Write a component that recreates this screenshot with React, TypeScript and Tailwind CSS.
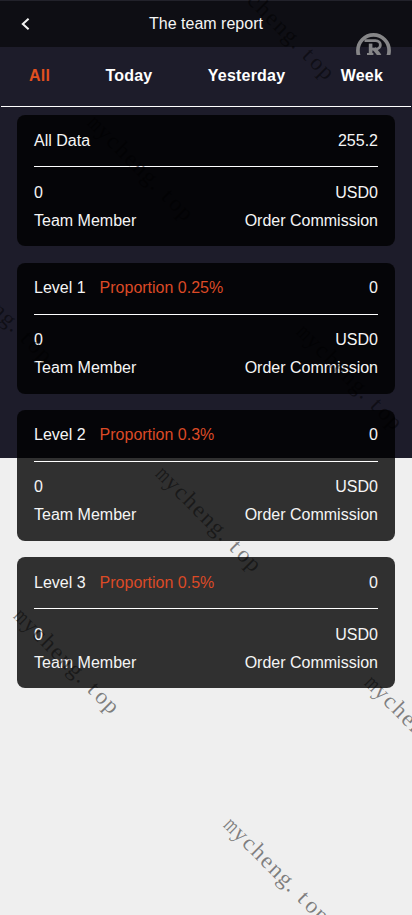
import { useState } from "react"
import clsx from "clsx"

interface ReportCard {
  title: string
  proportion?: string
  total: string
  members: string
  commission: string
}

const tabs = ["All", "Today", "Yesterday", "Week"]

const cards: ReportCard[] = [
  { title: "All Data", total: "255.2", members: "0", commission: "USD0" },
  { title: "Level 1", proportion: "0.25%", total: "0", members: "0", commission: "USD0" },
  { title: "Level 2", proportion: "0.3%", total: "0", members: "0", commission: "USD0" },
  { title: "Level 3", proportion: "0.5%", total: "0", members: "0", commission: "USD0" },
]

// centre of the first letter of each repeated mark
const marks = [
  [236, -17],
  [95, 124],
  [-46, 266],
  [304, 333],
  [163, 475],
  [21, 617],
  [372, 684],
  [231, 826],
]

function Header() {
  return (
    <header className="relative flex h-[47px] items-center justify-center border-t border-[#22222b] bg-[#0e0e14]">
      <svg
        className="absolute left-[21px] top-[17px]"
        width="9"
        height="12"
        viewBox="0 0 9 12"
        fill="none"
        stroke="#f2f2f2"
        strokeWidth="2"
      >
        <path d="M7.6 0.7 L1.8 6 L7.6 11.3" />
      </svg>
      <h1 className="text-base text-[#f5f5f5]">The team report</h1>
      <svg className="absolute left-[356px] top-8 z-10" width="35" height="22" viewBox="0 0 35 22">
        <circle cx="17.5" cy="17.5" r="15.6" fill="none" stroke="#868688" strokeWidth="3.7" />
        <g fill="none" stroke="#868688">
          <path d="M8.5 7.7 H19.4 C26 7.7 26 16.1 19.4 16.1 H16" strokeWidth="2.8" />
          <path d="M14.6 10.6 V22" strokeWidth="3.6" />
          <path d="M18.2 15.5 L23.8 22.6" strokeWidth="3.8" />
          <path d="M11 21 H17.4" strokeWidth="2" />
        </g>
      </svg>
    </header>
  )
}

function Card({ title, proportion, total, members, commission }: ReportCard) {
  return (
    <section className="h-[131px] rounded-lg bg-black/80 px-[17px] text-base text-[#f5f5f5]">
      <div className="flex h-[52px] items-center border-b border-white pb-[0.3px]">
        <span>{title}</span>
        {proportion && <span className="ml-[14px] text-[#dc4a26]">Proportion {proportion}</span>}
        <span className="ml-auto">{total}</span>
      </div>
      <div className="flex justify-between pt-[11.3px] leading-7">
        <div>
          <p>{members}</p>
          <p>Team Member</p>
        </div>
        <div className="text-right">
          <p>{commission}</p>
          <p>Order Commission</p>
        </div>
      </div>
    </section>
  )
}

function Watermark() {
  return (
    <svg
      className="pointer-events-none absolute inset-0 z-20"
      width="412"
      height="915"
      fontFamily="'Liberation Serif', serif"
      fontSize="23"
      textAnchor="middle"
      fill="#000"
      fillOpacity="0.47"
    >
      {marks.map(([x, y]) => (
        <g key={`${x},${y}`} transform={`translate(${x} ${y}) rotate(45)`}>
          {"mycheng.top".split("").map((ch, i) => (
            <text
              key={i}
              transform={`translate(${i * 12.7 - (ch === "." ? 3 : 0)} 6) scale(${ch === "m" ? 0.68 : 1} 1)`}
            >
              {ch}
            </text>
          ))}
        </g>
      ))}
    </svg>
  )
}

export default function App() {
  const [active, setActive] = useState("All")

  return (
    <div className="relative h-[915px] w-[412px] overflow-hidden bg-[#efefef] font-['Liberation_Sans',Arial,sans-serif]">
      <div className="h-[458px] bg-[#1d1c2a]">
        <Header />
        <nav className="mx-px flex h-[60px] justify-between border-b border-white px-7">
          {tabs.map((tab) => (
            <button
              key={tab}
              onClick={() => setActive(tab)}
              className={clsx(
                "h-[57px] text-base font-bold tracking-[0.2px]",
                active === tab ? "text-[#e2501f]" : "text-white"
              )}
            >
              {tab}
            </button>
          ))}
        </nav>
        <main className="flex flex-col gap-[16.4px] px-[17px] pt-[8.3px]">
          {cards.map((card) => (
            <Card key={card.title} {...card} />
          ))}
        </main>
      </div>
      <Watermark />
    </div>
  )
}
